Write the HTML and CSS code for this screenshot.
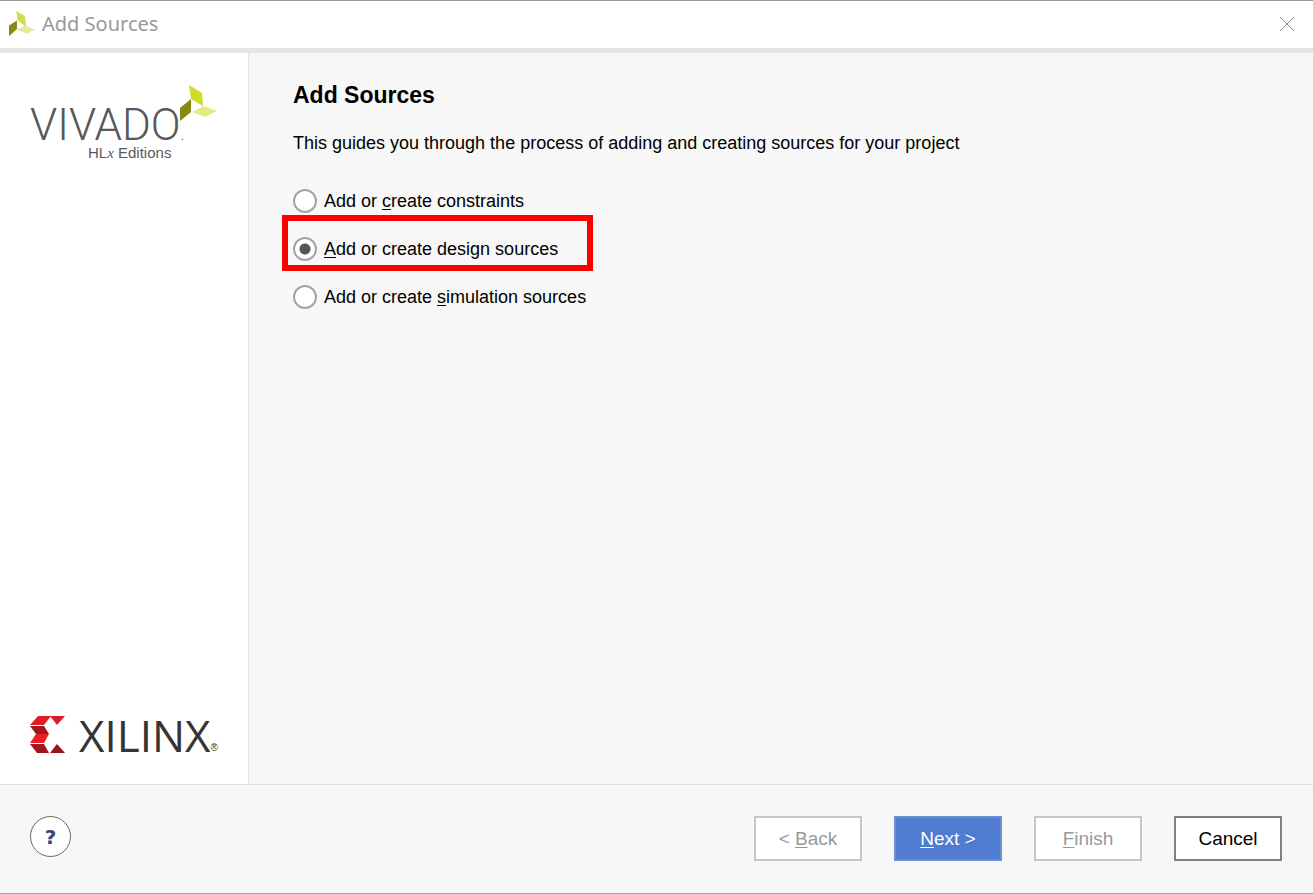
FILE: index.html
```html
<!DOCTYPE html>
<html lang="en">
<head>
<meta charset="utf-8">
<title>Add Sources</title>
<link rel="stylesheet" href="styles.css">
</head>
<body>

<header class="titlebar">
  <svg class="app-icon" width="26" height="26" viewBox="0 0 36 36">
    <polygon points="10,0 22,7 24,22 12,13" fill="#d3dc4a"/>
    <polygon points="0,20 11,13 11,25 0,35" fill="#858b10"/>
    <polygon points="11,26 23,20 36,26 25,31" fill="#e3ea9a"/>
  </svg>
  <span class="title">Add Sources</span>
  <button class="close" type="button" aria-label="Close">
    <svg width="16" height="16" viewBox="0 0 16 16"><path d="M1 1L15 15M15 1L1 15" stroke="#888" fill="none"/></svg>
  </button>
</header>

<div class="content">
  <aside class="sidebar">
    <div class="vivado">
      <svg class="vivado-mark" width="37" height="37" viewBox="0 0 37 37">
        <polygon points="9,0 22,8 23,21 11,14" fill="#cfdc28"/>
        <polygon points="0,23 11,14 11,27 0,36" fill="#858a0c"/>
        <polygon points="12,27 24,21 37,26 25,32" fill="#e2ea84"/>
      </svg>
      <div class="vivado-name">VIVADO<span class="dot">.</span></div>
      <div class="vivado-edition">HL<i>x</i> Editions</div>
    </div>
    <div class="xilinx">
      <svg class="xilinx-mark" width="35" height="37" viewBox="0 0 35 37">
        <polygon points="8,0 21,0 14,9 0,9" fill="#e31b23"/>
        <polygon points="0,10 14,10 19,18 6,18" fill="#a1171f"/>
        <polygon points="6,18 19,18 14,27 0,27" fill="#ed1c24"/>
        <polygon points="0,28 14,28 19,37 7,37" fill="#a1171f"/>
        <polygon points="20,0 35,0 27,9" fill="#d81f2a"/>
        <polygon points="20,37 27,28 35,37" fill="#96151d"/>
      </svg>
      <span class="xilinx-name">XILINX</span><span class="reg">®</span>
    </div>
  </aside>

  <main class="main">
    <h1>Add Sources</h1>
    <p>This guides you through the process of adding and creating sources for your project</p>
    <div class="options">
      <label class="option"><input type="radio" name="source"><span>Add or <u>c</u>reate constraints</span></label>
      <label class="option marked"><input type="radio" name="source" checked><span><u>A</u>dd or create design sources</span></label>
      <label class="option"><input type="radio" name="source"><span>Add or create <u>s</u>imulation sources</span></label>
    </div>
  </main>
</div>

<footer class="footer">
  <button class="help" type="button" aria-label="Help">?</button>
  <div class="buttons">
    <button class="btn" type="button" disabled><span>&lt; <u>B</u>ack</span></button>
    <button class="btn primary" type="button"><span><u>N</u>ext &gt;</span></button>
    <button class="btn" type="button" disabled><span><u>F</u>inish</span></button>
    <button class="btn cancel" type="button">Cancel</button>
  </div>
</footer>

</body>
</html>
```
FILE: styles.css
```css
* {
  box-sizing: border-box;
}

body {
  margin: 0;
  min-height: 100vh;
  display: flex;
  flex-direction: column;
  border-top: 1px solid #999;
  border-bottom: 1px solid #a3a3a3;
  background: #f7f7f7;
  color: #000;
  font-family: "Liberation Sans", Arial, sans-serif;
  font-size: 18px;
}

button {
  font: inherit;
  padding: 0;
}

u {
  text-decoration-thickness: 1px;
  text-underline-offset: 2px;
  text-decoration-skip-ink: none;
}

/* title bar */
.titlebar {
  display: flex;
  align-items: center;
  height: 52px;
  padding: 0 18px 2px 9px;
  border-bottom: 5px solid #e5e5e5;
  background: #fff;
}

.title {
  margin-left: 7px;
  color: #999;
  font-family: "Noto Sans", sans-serif;
  font-size: 20px;
}

.close {
  display: flex;
  margin-left: auto;
  border: 0;
  background: none;
}

/* content */
.content {
  flex: 1;
  display: flex;
}

.sidebar {
  display: flex;
  flex-direction: column;
  justify-content: space-between;
  width: 249px;
  padding: 32px 28px 31px 30px;
  border-right: 1px solid #e3e3e3;
  background: #fff;
}

.vivado {
  position: relative;
  color: #58595b;
  white-space: nowrap;
}

.vivado-mark {
  position: absolute;
  top: 0;
  left: 150px;
}

.vivado-name {
  padding-top: 24px;
  font-family: Roboto, sans-serif;
  font-size: 44px;
  font-weight: 300;
  line-height: 32px;
}

.vivado-name .dot {
  font-size: 16px;
  line-height: 0;
}

.vivado-edition {
  margin-top: 4px;
  padding-left: 58px;
  font-size: 15px;
  line-height: 16px;
}

.vivado-edition i {
  font-family: "Liberation Serif", serif;
}

.xilinx {
  display: flex;
  align-items: flex-end;
  color: #363435;
}

.xilinx-mark {
  flex: none;
}

.xilinx-name {
  margin-left: 14px;
  font-family: "Open Sans", sans-serif;
  font-size: 44px;
  line-height: 36px;
}

.reg {
  font-size: 10px;
}

.main {
  flex: 1;
  padding: 28px 44px;
}

h1 {
  margin: 0;
  font-size: 23px;
  line-height: 28px;
}

p {
  margin: 20px 0 0;
  line-height: 28px;
}

.options {
  margin-top: 20px;
}

.option {
  position: relative;
  display: flex;
  align-items: center;
  width: max-content;
  height: 48px;
}

.option input {
  appearance: none;
  width: 24px;
  height: 24px;
  margin: 0 7px 0 0;
  border: 2px solid #a3a3a3;
  border-radius: 50%;
  background: #fff;
}

.option input:checked {
  background: radial-gradient(circle, #555 5px, #fff 6px);
}

.marked::after {
  content: "";
  position: absolute;
  inset: -10px -35px 2px -11px;
  border: 6px solid #f00;
}

/* footer */
.footer {
  display: flex;
  align-items: flex-start;
  justify-content: space-between;
  height: 109px;
  padding: 31px 31px 0 30px;
  border-top: 1px solid #e0e0e0;
}

.help {
  width: 41px;
  height: 41px;
  border: 1px solid #666;
  border-radius: 50%;
  background: #fff;
  color: #34457c;
  font-family: "DejaVu Sans", sans-serif;
  font-size: 20px;
  font-weight: bold;
}

.buttons {
  display: flex;
  gap: 32px;
}

.btn {
  width: 108px;
  height: 45px;
  border: 2px solid #c6c6c6;
  background: #fff;
  color: #000;
  font-size: 19px;
}

.btn:disabled {
  color: #999;
}

.primary {
  border-color: #6d8fce;
  background: #4f7bd0;
  color: #fff;
}

.cancel {
  border-color: #808080;
}
```
